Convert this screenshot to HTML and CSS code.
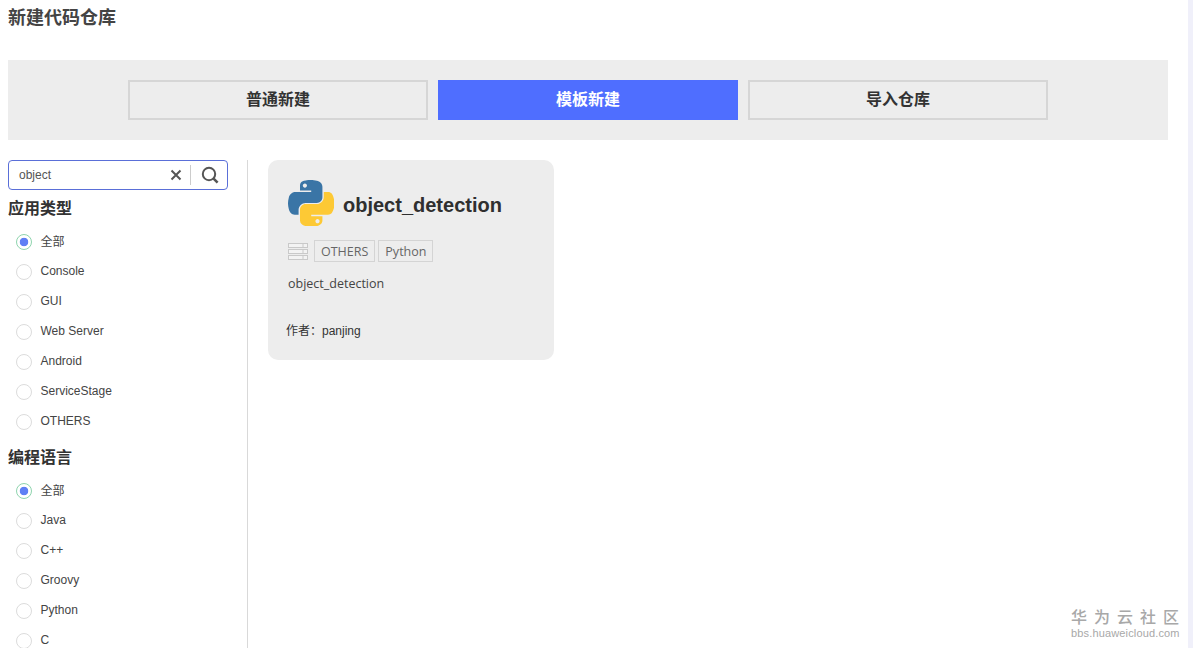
FILE: index.html
```html
<!DOCTYPE html>
<html lang="zh-CN">
<head>
<meta charset="utf-8">
<title>新建代码仓库</title>
<link rel="stylesheet" href="styles.css">
</head>
<body>
<div class="app">
  <main class="page">
    <h1 class="title">新建代码仓库</h1>
    <nav class="tabs">
      <a class="tab">普通新建</a>
      <a class="tab tab-active">模板新建</a>
      <a class="tab">导入仓库</a>
    </nav>
    <div class="content">
      <aside class="sidebar">
        <div class="search">
          <span class="search-text">object</span>
          <svg class="clear" width="12" height="12" viewBox="0 0 12 12"><path d="M1.5 1.5l9 9M10.5 1.5l-9 9" stroke="#555" stroke-width="2" fill="none"/></svg>
          <span class="search-sep"></span>
          <svg class="lens" width="18" height="18" viewBox="0 0 18 18"><circle cx="8" cy="8" r="6.2" stroke="#555" stroke-width="2" fill="none"/><path d="M12.6 12.6l4 4" stroke="#555" stroke-width="2.6" fill="none"/></svg>
        </div>
        <h2 class="group-title">应用类型</h2>
        <ul class="radios">
          <li class="radio-row"><span class="radio radio-on"></span><span class="cjk-label">全部</span></li>
          <li class="radio-row"><span class="radio"></span>Console</li>
          <li class="radio-row"><span class="radio"></span>GUI</li>
          <li class="radio-row"><span class="radio"></span>Web Server</li>
          <li class="radio-row"><span class="radio"></span>Android</li>
          <li class="radio-row"><span class="radio"></span>ServiceStage</li>
          <li class="radio-row"><span class="radio"></span>OTHERS</li>
        </ul>
        <h2 class="group-title group-second">编程语言</h2>
        <ul class="radios">
          <li class="radio-row"><span class="radio radio-on"></span><span class="cjk-label">全部</span></li>
          <li class="radio-row"><span class="radio"></span>Java</li>
          <li class="radio-row"><span class="radio"></span>C++</li>
          <li class="radio-row"><span class="radio"></span>Groovy</li>
          <li class="radio-row"><span class="radio"></span>Python</li>
          <li class="radio-row"><span class="radio"></span>C</li>
        </ul>
      </aside>
      <section class="results">
        <article class="card">
          <header class="card-head">
            <svg class="py-logo" width="46" height="46" viewBox="0 0 110 110">
              <path fill="#3a75a6" d="M54.9 0C50.3 0 46 .4 42.1 1.1 30.8 3.1 28.7 7.3 28.7 15v10.2h26.8v3.4H18.6c-7.8 0-14.6 4.7-16.7 13.6-2.5 10.2-2.6 16.6 0 27.2 1.9 7.9 6.5 13.6 14.2 13.6h9.2V71.8c0-8.8 7.7-16.7 16.8-16.7h26.8c7.4 0 13.4-6.1 13.4-13.6V16C82.2 8.7 76.1 3.2 68.8 2 64.3.3 59.5 0 54.9 0zM40.4 8.2c2.8 0 5 2.3 5 5.1s-2.3 5.1-5 5.1c-2.8 0-5-2.3-5-5.1s2.2-5.1 5-5.1z"/>
              <path fill="#fdc935" d="M85.6 28.7v11.9c0 9.2-7.8 17-16.7 17H42.1c-7.3 0-13.4 6.3-13.4 13.6v25.5c0 7.3 6.3 11.5 13.4 13.6 8.5 2.5 16.6 2.9 26.8 0 6.8-2 13.4-5.9 13.4-13.6V86.5H55.5v-3.4h40.2c7.8 0 10.7-5.4 13.4-13.6 2.8-8.4 2.7-16.5 0-27.2-1.9-7.8-5.6-13.6-13.4-13.6zM70.6 93.3c2.8 0 5 2.3 5 5.1s-2.3 5.1-5 5.1c-2.8 0-5-2.3-5-5.1s2.2-5.1 5-5.1z"/>
            </svg>
            <h3 class="card-title">object_detection</h3>
          </header>
          <div class="tags">
            <svg class="stack" width="20" height="17" viewBox="0 0 20 17">
              <g fill="#f3f3f3" stroke="#c9c9c9"><rect x=".5" y=".5" width="19" height="4"/><rect x=".5" y="6.5" width="19" height="4"/><rect x=".5" y="12.5" width="19" height="4"/></g>
              <path d="M15 .5v4M15 6.5v4M15 12.5v4" stroke="#c9c9c9"/>
            </svg>
            <span class="tag">OTHERS</span>
            <span class="tag">Python</span>
          </div>
          <p class="card-desc">object_detection</p>
          <p class="card-author">作者：panjing</p>
        </article>
      </section>
    </div>
  </main>
  <div class="edge"></div>
</div>
<div class="watermark">
  <div class="wm-cn">华为云社区</div>
  <div class="wm-url">bbs.huaweicloud.com</div>
</div>
</body>
</html>
```

FILE: styles.css
```css
* { box-sizing: border-box; }
html, body { margin: 0; height: 100%; overflow: hidden; background: #fff; }
body { font-family: "Liberation Sans", "Noto Sans CJK SC", sans-serif; color: #333; }
.app { display: flex; height: 100vh; overflow: hidden; }
.page { flex: 1; min-width: 0; padding: 0 20px 0 8px; }
.edge { width: 5px; background: #f0f0fa; }

.title { margin: 0; height: 60px; padding-top: 6px; font-size: 18px; line-height: 24px; font-weight: 700; color: #444; }

.tabs { display: flex; justify-content: flex-start; gap: 10px; height: 80px; padding: 20px 0 20px 120px; background: #ededed; }
.tab { width: 300px; height: 40px; border: 2px solid #d6d6d6; font-size: 16px; font-weight: 700; line-height: 36px; text-align: center; color: #333; }
.tab-active { background: #4f6eff; border-color: #4f6eff; color: #fff; }

.content { display: flex; margin-top: 20px; }
.sidebar { width: 240px; height: 488px; padding-right: 19px; border-right: 1px solid #d9d9d9; overflow: hidden; flex: none; }

.search { display: flex; align-items: center; height: 30px; padding: 0 8px 0 10px; border: 1px solid #5a6fd8; border-radius: 4px; }
.search-text { flex: 1; font-size: 12px; color: #555; }
.clear { margin-right: 8px; }
.search-sep { width: 1px; height: 20px; background: #ccc; margin-right: 10px; }

.group-title { margin: 0; height: 36px; padding-top: 1px; font-size: 16px; line-height: 36px; font-weight: 700; color: #333; }
.group-second { margin-top: 3px; }
.radios { list-style: none; margin: 0; padding: 0; }
.radio-row { display: flex; align-items: center; height: 30px; padding-left: 8px; font-size: 12px; color: #444; }
.radio { width: 16px; height: 16px; margin-right: 8.5px; border: 1px solid #dcdcdc; border-radius: 50%; background: #fff; flex: none; position: relative; top: 1px; }
.radio-on { border-color: #8fd4ae; background: radial-gradient(circle, #5f7ff5 0, #5f7ff5 4px, #fff 4.6px); }
.cjk-label { margin-bottom: 2px; }

.results { flex: 1; padding-left: 20px; }
.card { width: 286px; height: 200px; padding: 20px 20px 0 18px; background: #ededed; border-radius: 10px; }
.card-head { display: flex; align-items: center; gap: 9px; padding-left: 2px; height: 46px; }
.py-logo { flex: none; }
.card-title { margin: 4px 0 0; font-size: 20px; font-weight: 700; color: #2f2f2f; }
.tags { display: flex; align-items: center; gap: 3px; height: 22px; margin-top: 14px; padding-left: 2px; }
.stack { margin-right: 3px; }
.tag { height: 22px; padding: 0 6px; border: 1px solid #d4d4d4; font-family: "Open Sans", "Liberation Sans", sans-serif; font-size: 12.5px; line-height: 21px; color: #666; }
.card-desc { margin: 13px 0 0 2px; font-family: "Open Sans", "Liberation Sans", sans-serif; font-size: 12.5px; line-height: 18px; color: #444; }
.card-author { margin: 29px 0 0; font-size: 12px; line-height: 18px; color: #333; }

.watermark { position: absolute; left: 1071px; top: 608px; width: 110px; color: #a8a8a8; }
.wm-cn { font-size: 16px; line-height: 19px; letter-spacing: 7px; white-space: nowrap; font-weight: 500; }
.wm-url { font-size: 11px; line-height: 12px; letter-spacing: .15px; white-space: nowrap; }
```
